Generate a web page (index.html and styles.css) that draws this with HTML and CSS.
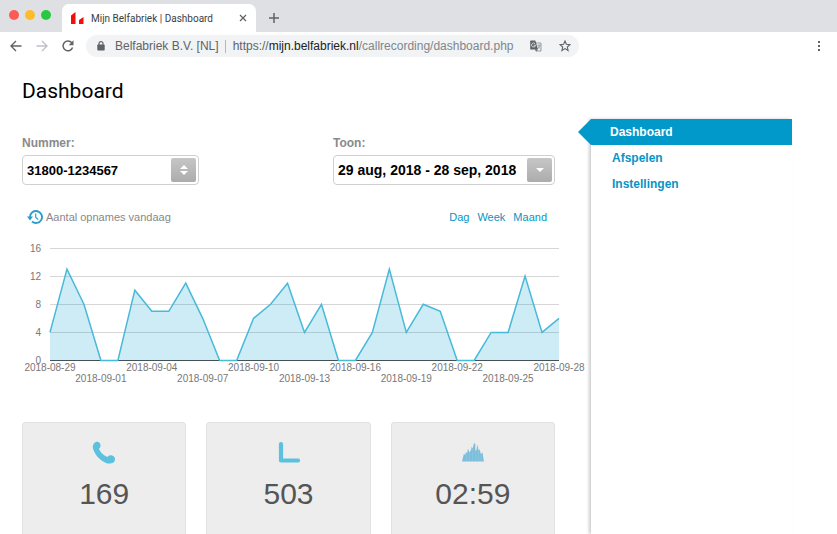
FILE: index.html
```html
<!DOCTYPE html>
<html lang="nl">
<head>
<meta charset="utf-8">
<title>Mijn Belfabriek | Dashboard</title>
<link rel="stylesheet" href="styles.css">
</head>
<body>
<div class="window">
  <header class="tabbar">
    <div class="lights"><span class="light red"></span><span class="light yellow"></span><span class="light green"></span></div>
    <div class="tab">
      <svg class="favicon" width="13" height="12" viewBox="0 0 13 12"><path d="M0 12V3.500L4.500 0v12zM8 12V8L12.500 5v7z" fill="#f30d0d"/></svg>
      <span class="tab-title">Mijn Belfabriek | Dashboard</span>
      <button class="icon-button" aria-label="Tabblad sluiten"><svg width="8" height="8" viewBox="0 0 8 8"><path d="M1 1l6 6M7 1L1 7" stroke="#5f6368" stroke-width="1.300"/></svg></button>
    </div>
    <button class="icon-button new-tab" aria-label="Nieuw tabblad"><svg width="10" height="10" viewBox="0 0 10 10"><path d="M5 0v10M0 5h10" stroke="#5f6368" stroke-width="1.500"/></svg></button>
  </header>
  <div class="toolbar">
    <button class="icon-button" aria-label="Terug"><svg width="12" height="12" viewBox="0 0 12 12"><path d="M11.500 6H1.200M6 1L1 6l5 5" fill="none" stroke="#5f6368" stroke-width="1.400"/></svg></button>
    <button class="icon-button" aria-label="Vooruit"><svg width="12" height="12" viewBox="0 0 12 12"><path d="M.5 6h10.300M6 1l5 5-5 5" fill="none" stroke="#bdc1c6" stroke-width="1.400"/></svg></button>
    <button class="icon-button" aria-label="Vernieuwen"><svg width="12" height="12" viewBox="0 0 12 12"><path d="M10.600 7.500A4.900 4.900 0 1 1 9.800 2.800" fill="none" stroke="#5f6368" stroke-width="1.500"/><path d="M11.500.3v5H6.700z" fill="#5f6368"/></svg></button>
    <div class="address">
      <svg width="8" height="10" viewBox="0 0 8 10"><path d="M2 4V2.700a2 2 0 0 1 4 0V4" fill="none" stroke="#5f6368" stroke-width="1.200"/><rect x=".3" y="3.500" width="7.400" height="6" rx=".8" fill="#5f6368"/></svg>
      <span class="owner">Belfabriek B.V. [NL]</span>
      <span class="url">https://<b>mijn.belfabriek.nl</b><i>/callrecording/dashboard.php</i></span>
      <button class="icon-button translate" aria-label="Vertalen"><svg width="12" height="12" viewBox="0 0 12 12"><path d="M5 3h6v8H6z" fill="#f1f3f4" stroke="#80868b" stroke-width=".8"/><path d="M7.300 5.300h3.200M9 4.500v.8M10 5.300C9.700 7 8.700 8 7.300 8.700M7.900 6.300L10.300 8.700" fill="none" stroke="#80868b" stroke-width=".7"/><path d="M.8.500h4.500L8 9.500H.8a.6.600 0 0 1-.6-.6V1.100A.6.600 0 0 1 .8.500z" fill="#5f6368"/><path d="M5.300 9.500h2.500L6 11.500z" fill="#5f6368"/><path d="M5 3.700A2 2 0 1 0 5.500 5.200H3.600" fill="none" stroke="#f1f3f4" stroke-width=".8"/></svg></button>
      <button class="icon-button" aria-label="Bladwijzer"><svg width="12" height="12" viewBox="0 0 12 12"><path d="M6 1l1.400 3.300 3.600.3-2.700 2.400.8 3.500L6 8.600l-3.100 1.900.8-3.500L1 4.600l3.600-.3z" fill="none" stroke="#5f6368" stroke-width="1.100"/></svg></button>
    </div>
    <button class="icon-button menu" aria-label="Menu"><svg width="4" height="12" viewBox="0 0 4 12"><path d="M1 1h2v2H1zM1 5h2v2H1zM1 9h2v2H1z" fill="#5f6368"/></svg></button>
  </div>

  <div class="content">
    <main>
      <h1>Dashboard</h1>
      <form class="filters">
        <div class="field number">
          <label for="number">Nummer:</label>
          <div class="control">
            <select id="number"><option>31800-1234567</option></select>
            <span class="knob"><svg width="8" height="10" viewBox="0 0 8 10"><path d="M0 4l4-4 4 4zM0 6h8L4 10z" fill="#fff"/></svg></span>
          </div>
        </div>
        <div class="field period">
          <label for="period">Toon:</label>
          <button id="period" class="control" type="button">29 aug, 2018 - 28 sep, 2018<span class="knob"><svg width="8" height="4" viewBox="0 0 8 4"><path d="M0 0h8L4 4z" fill="#fff"/></svg></span></button>
        </div>
      </form>

      <section>
        <div class="chart-head">
          <svg width="16" height="14" viewBox="0 0 16 14"><path d="M3 7a6 6 0 1 1 2 4.500" fill="none" stroke="#2a9fcb" stroke-width="1.900"/><path d="M0 6.500h6L3 10.500z" fill="#2a9fcb"/><path d="M8.700 3.500v4l2.600 2" fill="none" stroke="#2a9fcb" stroke-width="1.200"/></svg>
          <h2>Aantal opnames vandaag</h2>
          <nav><a href="#dag">Dag</a><a href="#week">Week</a><a href="#maand">Maand</a></nav>
        </div>
        <svg class="chart" viewBox="0 0 563 150" role="img" aria-label="Aantal opnames per dag"></svg>
      </section>

      <section class="stats">
        <article>
          <svg width="24" height="24" viewBox="0 0 24 24"><path d="M2 2.500C3.500.3 6.800.2 8 2.500c1 1.900.8 3.600-1 5.200.9 3.200 3.800 6.200 8.300 8.200 1.700-1.700 4-2.200 6-.9 2.400 1.500 2.200 4.800.2 6.500-2 1.500-5.500 1.400-8.500-.1C7.200 18.600 2.700 13.500 1 7.500.6 5.500.8 3.900 2 2.500z" fill="#5cc0df"/></svg>
          <p>169</p>
        </article>
        <article>
          <svg width="24" height="24" viewBox="0 0 24 24"><path d="M5 3v16.500H22" fill="none" stroke="#5cc0df" stroke-width="4.200" stroke-linecap="round" stroke-linejoin="round"/></svg>
          <p>503</p>
        </article>
        <article>
          <svg width="24" height="24" viewBox="0 0 24 24"><path d="M1 20.500l1.200-5 .8-3 1 1.500 1.200-3L6.200 12l.8-4.500 1.500 4L10 9l.7-3.500 1 2L13 2l1.300 1 .2 7 1-1L16.500 3.500l1.200 6 1.100-1L19.800 13l1.700-1.500.7 4.500.8 4.500z" fill="#7dbfdb"/><path d="M5.500 13v7M8.500 12v8M11.500 8v12M14.700 10v10M17.500 10v10M20 14v6" stroke="#94cbe1" stroke-width=".5"/></svg>
          <p>02:59</p>
        </article>
      </section>
    </main>
    <aside>
      <nav>
        <a class="active" href="#dashboard">Dashboard</a>
        <a href="#afspelen">Afspelen</a>
        <a href="#instellingen">Instellingen</a>
      </nav>
    </aside>
  </div>
</div>
<script src="chart.js"></script>
</body>
</html>
```
FILE: styles.css
```css
* { box-sizing: border-box; }
body { margin: 0; background: #fff; font-family: "Liberation Sans", Arial, sans-serif; }
a { color: #0a93c4; text-decoration: none; }
button, select { font: inherit; color: inherit; }
svg { display: block; flex: none; }
h1, h2, p { margin: 0; }

.window { height: 100vh; display: flex; flex-direction: column; overflow: hidden; }

.tabbar { flex: none; display: flex; height: 32px; padding-left: 9px; background: #dee0e4; font-family: Roboto, sans-serif; }
.lights { display: flex; gap: 6px; padding-top: 10px; }
.light { width: 10px; height: 10px; border-radius: 50%; }
.red { background: #fc5b57; }
.yellow { background: #fdbc2e; }
.green { background: #28c940; }
.tab { display: flex; align-items: center; width: 194px; margin: 4px 0 0 11px; padding: 0 9px; border-radius: 7px 7px 0 0; background: #fff; }
.tab-title { flex: 1; margin-left: 7px; font-size: 10px; color: #3c4043; white-space: nowrap; }
.icon-button { display: flex; padding: 0; border: 0; background: none; }
.new-tab { align-self: center; margin: 4px 0 0 13px; }

.toolbar { flex: none; display: flex; align-items: center; gap: 14px; height: 28px; padding: 0 16px 0 10px; }
.address { display: flex; align-items: center; height: 22px; margin-left: -2px; padding: 0 8px 0 11px; border-radius: 11px; background: #f1f3f4; font-size: 12px; color: #5f6368; white-space: nowrap; }
.owner { margin-left: 10px; padding-right: 6px; border-right: 1px solid #b5b8bb; line-height: 13px; }
.url { margin-left: 7px; }
.url b { font-weight: 400; color: #202124; }
.url i { font-style: normal; color: #80868b; }
.translate { margin: 0 17px; }
.menu { margin-left: auto; }

.content { flex: 1; display: flex; min-height: 0; }
main { flex: 1; min-width: 0; padding: 16px 36px 0 22px; }
h1 { margin-bottom: 29px; font: 400 21px/30px Roboto, sans-serif; color: #000; }

.filters { display: flex; justify-content: space-between; }
.field label { display: block; margin-bottom: 4px; font-size: 12px; line-height: 16px; font-weight: 700; color: #8a8a8a; }
.number { width: 177px; }
.period { width: 222px; }
.control { display: block; position: relative; width: 100%; height: 30px; padding: 0 0 0 4px; border: 1px solid #d0d0d0; border-radius: 4px; background: #fff; text-align: left; white-space: nowrap; }
.control select { appearance: none; width: 100%; height: 28px; padding: 0; border: 0; background: none; font-size: 13px; font-weight: 700; color: #000; }
.period .control { font-size: 14px; font-weight: 700; color: #000; }
.knob { position: absolute; top: 2px; right: 2px; bottom: 2px; display: flex; align-items: center; justify-content: center; width: 25px; border-radius: 2px; background: linear-gradient(#c6c6c6, #acacac); pointer-events: none; }

.chart-head { display: flex; align-items: center; height: 20px; margin-top: 22px; padding: 0 8px 0 5px; font-size: 11px; }
.chart-head h2 { margin-left: 3px; font-size: 11px; font-weight: 400; color: #888; }
.chart-head nav { display: flex; gap: 8px; margin-left: auto; }
.chart { width: calc(100% + 30px); margin-top: 9px; overflow: visible; }
.chart text { font-size: 10px; fill: #777; text-anchor: middle; }
.chart .value { text-anchor: end; }
.grid { stroke: #d6d6d6; }
.axis { stroke: #4a4a4a; }
.area { fill: #06a0cd; fill-opacity: .2; }
.line { fill: none; stroke: #48b9d9; stroke-width: 1.5px; }

.stats { display: grid; grid-template-columns: repeat(3, 1fr); gap: 20px; margin-top: 36px; }
.stats article { display: flex; flex-direction: column; align-items: center; height: 150px; padding-top: 18px; border: 1px solid #e2e2e2; border-radius: 3px; background: #ededed; }
.stats p { margin-top: 9px; font-size: 30px; line-height: 40px; color: #555; }

aside { width: 201px; margin: 59px 45px 0 0; box-shadow: -2px 0 3px #ccc; font-size: 12px; font-weight: 700; line-height: 26px; }
aside a { display: block; padding-left: 21px; }
aside .active { position: relative; padding-left: 19px; background: #0099c9; color: #fff; }
aside .active::before { content: ""; position: absolute; top: 0; right: 100%; width: 13px; height: 100%; background: #0099c9; clip-path: polygon(100% 0, 0 50%, 100% 100%); }
```
FILE: chart.js
```javascript
const values = [4, 13, 8, 0, 0, 10, 7, 7, 11, 6, 0, 0, 6, 8, 11, 4, 8, 0, 0, 4, 13, 4, 8, 7, 0, 0, 4, 4, 12, 4, 6];
const left = 28, right = 537, top16 = 12, base = 124.5;
const x = i => left + i * (right - left) / (values.length - 1);
const y = v => base - v * (base - top16) / 16;
const points = values.map((v, i) => `${x(i)},${y(v)}`).join(" ");
let marks = "";
for (const v of [16, 12, 8, 4, 0]) {
  const gy = Math.floor(y(v)) + 0.5;
  marks += `<line class="${v ? "grid" : "axis"}" x1="${left}" x2="${right}" y1="${gy}" y2="${gy}"/>`;
  marks += `<text class="value" x="19" y="${gy + 3}">${v}</text>`;
}
marks += `<polygon class="area" points="${left},${base} ${points} ${right},${base}"/>`;
marks += `<polyline class="line" points="${points}"/>`;
for (let i = 0; i < values.length; i += 3) {
  const day = new Date(Date.UTC(2018, 7, 29 + i)).toISOString().slice(0, 10);
  marks += `<text x="${x(i)}" y="${i % 2 ? 146 : 135}">${day}</text>`;
}
document.querySelector(".chart").innerHTML = marks;
```
